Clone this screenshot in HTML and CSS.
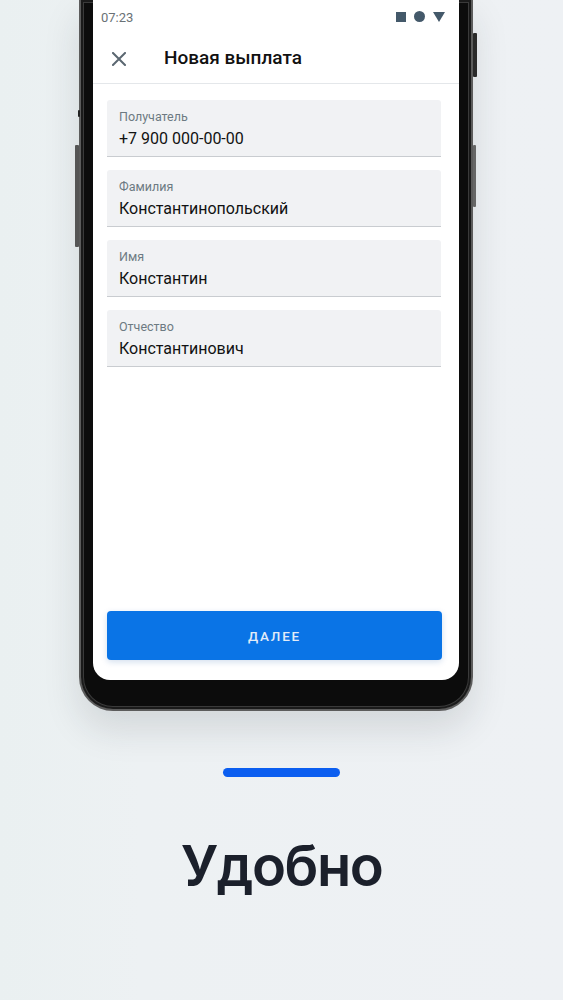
FILE: index.html
```html
<!DOCTYPE html>
<html lang="ru">
<head>
<meta charset="utf-8">
<title>Удобно</title>
<link rel="stylesheet" href="styles.css">
</head>
<body>
<div class="page">
  <div class="phone">
    <span class="btn-side btn-right-1"></span>
    <span class="btn-side btn-right-2"></span>
    <span class="btn-side btn-left-1"></span>
    <span class="btn-side btn-left-mark"></span>
    <div class="screen">
      <div class="statusbar">
        <span class="time">07:23</span>
        <div class="sys-icons">
          <span class="ic-square"></span>
          <span class="ic-circle"></span>
          <svg class="ic-tri" width="12" height="10" viewBox="0 0 12 10"><path d="M0 0H12L6 10Z" fill="#44596a"/></svg>
        </div>
      </div>
      <div class="appbar">
        <svg class="close" width="14" height="14" viewBox="0 0 14 14"><path d="M1 1L13 13M13 1L1 13" stroke="#5b6771" stroke-width="2" stroke-linecap="square"/></svg>
        <span class="title">Новая выплата</span>
      </div>
      <div class="form">
        <div class="field"><span class="label">Получатель</span><span class="value">+7 900 000-00-00</span></div>
        <div class="field"><span class="label">Фамилия</span><span class="value">Константинопольский</span></div>
        <div class="field"><span class="label">Имя</span><span class="value">Константин</span></div>
        <div class="field"><span class="label">Отчество</span><span class="value">Константинович</span></div>
      </div>
      <button class="next">ДАЛЕЕ</button>
    </div>
  </div>
  <div class="indicator"></div>
  <h1 class="headline">Удобно</h1>
</div>
</body>
</html>
```

FILE: styles.css
```css
* { box-sizing: border-box; }
html, body { margin: 0; padding: 0; }
body {
  background: linear-gradient(90deg, #eaf0f1 0%, #edf1f3 25%, #eef1f4 100%);
  font-family: Roboto, "Noto Sans", sans-serif;
  width: 563px;
  height: 1000px;
  overflow: hidden;
}
.page {
  display: flex;
  flex-direction: column;
  align-items: center;
}
.phone {
  position: relative;
  align-self: flex-start;
  margin-left: 79px;
  width: 394px;
  height: 711px;
  padding: 0 12px 30px 12px;
  background: #0c0c0c;
  border: 2px solid #5c5c5c;
  border-top: none;
  border-radius: 0 0 34px 34px;
  box-shadow: inset 0 0 0 2px #1a1a1a, inset 0 0 0 3px #3a3a3a, 0 18px 36px rgba(30, 40, 50, 0.13);
}
.btn-side {
  position: absolute;
  border-radius: 1px;
}
.btn-right-1 { right: -6px; top: 33px; width: 4px; height: 44px; background: #2a2a2a; }
.btn-right-2 { right: -5px; top: 145px; width: 3px; height: 62px; background: #666; }
.btn-left-1 { left: -6px; top: 145px; width: 4px; height: 102px; background: #555; }
.btn-left-mark { left: -3px; top: 110px; width: 2px; height: 7px; background: #222; }
.screen {
  height: 680px;
  background: #fff;
  border-radius: 0 0 17px 17px;
  display: flex;
  flex-direction: column;
  overflow: hidden;
}
.statusbar {
  height: 34px;
  display: flex;
  align-items: center;
  justify-content: space-between;
  padding: 0 14px 0 8px;
}
.time {
  font-size: 13px;
  color: #6a7176;
}
.sys-icons {
  display: flex;
  align-items: center;
  gap: 8px;
  margin-top: -1px;
}
.ic-square { width: 10px; height: 10px; background: #44596a; }
.ic-circle { width: 11px; height: 11px; border-radius: 50%; background: #44596a; }
.ic-tri { display: block; }
.appbar {
  height: 50px;
  display: flex;
  align-items: center;
  border-bottom: 1px solid #e4e7ea;
  padding-left: 19px;
}
.close { display: block; margin-top: 0; }
.title {
  margin-left: 38px;
  font-size: 19px;
  font-weight: 500;
  color: #111;
  margin-top: -2px;
}
.form {
  display: flex;
  flex-direction: column;
  gap: 13px;
  padding: 16px 0 0 14px;
}
.field {
  width: 334px;
  height: 57px;
  background: #f1f2f4;
  border-bottom: 1px solid #c9ccd0;
  border-radius: 3px 3px 0 0;
  display: flex;
  flex-direction: column;
  padding: 9px 12px 0;
}
.label {
  font-size: 12.5px;
  color: #6d7a82;
  line-height: 16px;
}
.value {
  font-size: 16px;
  color: #121212;
  line-height: 22px;
  margin-top: 3px;
}
.next {
  margin: auto 0 20px 14px;
  width: 335px;
  height: 49px;
  border: none;
  border-radius: 4px;
  background: #0a74e6;
  color: #e2ecf8;
  font-family: Roboto, "Noto Sans", sans-serif;
  font-size: 13.5px;
  font-weight: 500;
  letter-spacing: 1.8px;
  box-shadow: 0 2px 6px rgba(10, 80, 160, 0.18);
}
.indicator {
  margin-top: 57px;
  width: 117px;
  height: 9px;
  border-radius: 5px;
  background: #0b5ef0;
}
.headline {
  margin: 57px 0 0;
  font-family: Inter, Roboto, sans-serif;
  font-size: 56px;
  font-weight: 600;
  line-height: 64px;
  color: #1b202b;
  letter-spacing: -1.5px;
}
```
